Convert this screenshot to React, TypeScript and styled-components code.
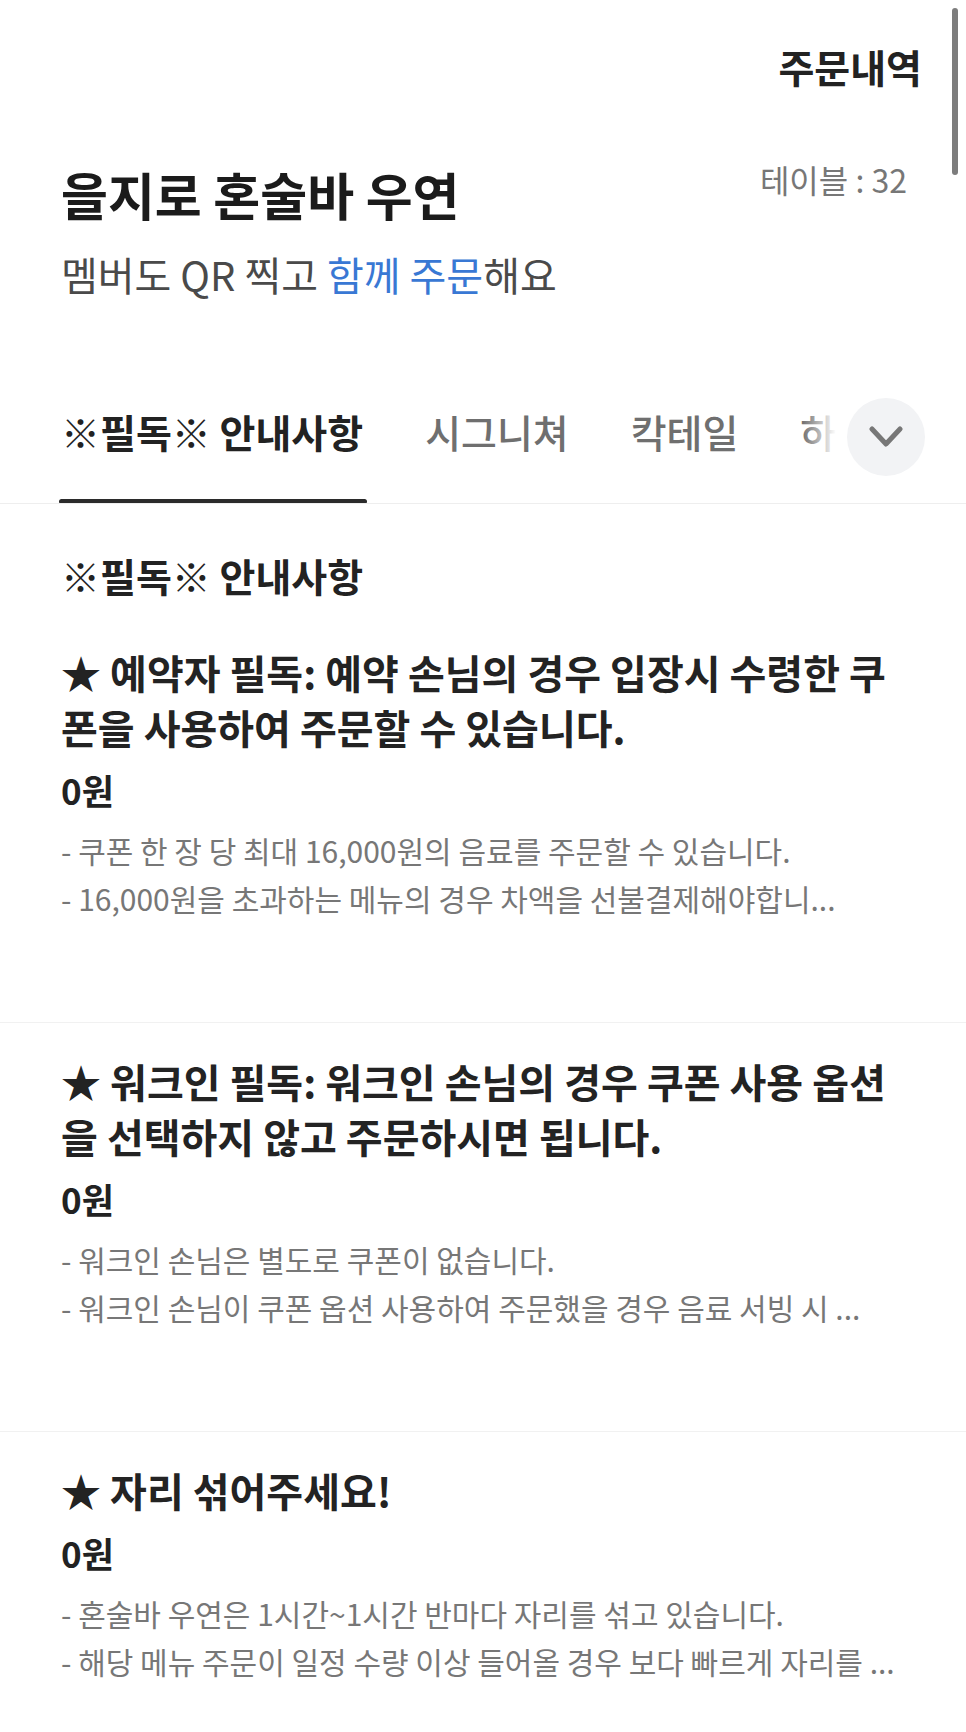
import React from 'react';
import styled, { createGlobalStyle } from 'styled-components';

const GlobalStyle = createGlobalStyle`
  html, body { margin: 0; padding: 0; background: #ffffff; }
  body {
    font-family: "Noto Sans CJK KR", "Noto Sans", sans-serif;
    color: #222222;
    -webkit-font-smoothing: antialiased;
  }
  * { box-sizing: border-box; }
`;

const Page = styled.div`
  position: relative;
  width: 966px;
  min-height: 1732px;
  background: #ffffff;
  overflow: hidden;
`;

const ScrollThumb = styled.div`
  position: absolute;
  top: 8px;
  right: 8px;
  width: 6px;
  height: 167px;
  border-radius: 3px;
  background: #7d7d7d;
`;

const TopBar = styled.header`
  display: flex;
  justify-content: flex-end;
  padding: 42px 44px 0 61px;
`;

const OrderHistoryButton = styled.button`
  border: 0;
  background: none;
  padding: 0;
  font-family: inherit;
  font-size: 39px;
  font-weight: 700;
  line-height: 48px;
  color: #222222;
`;

const StoreInfo = styled.section`
  padding: 69px 59px 0 61px;
`;

const StoreRow = styled.div`
  display: flex;
  justify-content: space-between;
  align-items: flex-start;
`;

const StoreName = styled.h1`
  margin: 0;
  font-size: 51px;
  font-weight: 700;
  line-height: 70px;
  color: #1b1b1b;
`;

const TableNo = styled.span`
  font-size: 32px;
  line-height: 40px;
  color: #777777;
`;

const Subtitle = styled.p`
  margin: 20px 0 0;
  font-size: 40px;
  line-height: 50px;
  color: #4a4a4a;
`;

const Highlight = styled.span`
  color: #3978d4;
`;

const TabBar = styled.nav`
  position: relative;
  margin-top: 71px;
  border-bottom: 1px solid #eeeeee;
`;

const TabList = styled.div`
  display: flex;
  gap: 62px;
  padding: 36px 0 0 61px;
  overflow: hidden;
  white-space: nowrap;
`;

const Tab = styled.div<{ $active?: boolean }>`
  position: relative;
  flex: none;
  font-size: 39px;
  line-height: 50px;
  padding-bottom: 47px;
  font-weight: ${p => (p.$active ? 700 : 500)};
  color: ${p => (p.$active ? '#222222' : '#6f6f6f')};

  &::after {
    content: '';
    display: ${p => (p.$active ? 'block' : 'none')};
    position: absolute;
    left: -2px;
    right: -4px;
    bottom: -1px;
    height: 5px;
    border-radius: 3px;
    background: #2b2b2b;
  }
`;

const TabFade = styled.div`
  position: absolute;
  top: 0;
  bottom: 1px;
  right: 0;
  width: 164px;
  background: linear-gradient(90deg, rgba(255, 255, 255, 0) 0px, #ffffff 34px);
`;

const ExpandButton = styled.button`
  position: absolute;
  top: 28px;
  right: 41px;
  width: 78px;
  height: 78px;
  border: 0;
  padding: 0;
  border-radius: 50%;
  background: #f2f3f5;
  display: flex;
  align-items: center;
  justify-content: center;
`;

const SectionTitle = styled.h2`
  margin: 0;
  padding: 46px 61px 0;
  font-size: 39px;
  font-weight: 700;
  line-height: 50px;
  color: #222222;
`;

const MenuList = styled.div`
  margin-top: 14px;
`;

const MenuItem = styled.article`
  padding: 31px 61px 100px;
  border-bottom: 1px solid #f1f1f1;
`;

const MenuTitle = styled.h3`
  margin: 0;
  font-size: 40px;
  font-weight: 700;
  line-height: 55px;
  color: #232323;
`;

const Price = styled.div`
  margin-top: 13px;
  font-size: 35px;
  font-weight: 700;
  line-height: 44px;
  color: #222222;
`;

const Description = styled.div`
  margin-top: 14px;
  font-size: 30px;
  line-height: 48px;
  color: #777777;
`;

const DescLine = styled.div`
  white-space: nowrap;
  overflow: hidden;
`;

const ChevronDown = () => (
  <svg width="34" height="22" viewBox="0 0 34 22" fill="none">
    <polyline
      points="3,3 17,18 31,3"
      stroke="#777777"
      strokeWidth="5"
      strokeLinecap="round"
      strokeLinejoin="round"
    />
  </svg>
);

const tabs = ['※필독※ 안내사항', '시그니쳐', '칵테일', '하이볼', '맥주'];

const items = [
  {
    title: '★ 예약자 필독: 예약 손님의 경우 입장시 수령한 쿠폰을 사용하여 주문할 수 있습니다.',
    price: '0원',
    lines: [
      '- 쿠폰 한 장 당 최대 16,000원의 음료를 주문할 수 있습니다.',
      '- 16,000원을 초과하는 메뉴의 경우 차액을 선불결제해야합니...',
    ],
  },
  {
    title: '★ 워크인 필독: 워크인 손님의 경우 쿠폰 사용 옵션을 선택하지 않고 주문하시면 됩니다.',
    price: '0원',
    lines: [
      '- 워크인 손님은 별도로 쿠폰이 없습니다.',
      '- 워크인 손님이 쿠폰 옵션 사용하여 주문했을 경우 음료 서빙 시 ...',
    ],
  },
  {
    title: '★ 자리 섞어주세요!',
    price: '0원',
    lines: [
      '- 혼술바 우연은 1시간~1시간 반마다 자리를 섞고 있습니다.',
      '- 해당 메뉴 주문이 일정 수량 이상 들어올 경우 보다 빠르게 자리를 ...',
    ],
  },
];

export default function App() {
  return (
    <Page>
      <GlobalStyle />
      <TopBar>
        <OrderHistoryButton>주문내역</OrderHistoryButton>
      </TopBar>
      <StoreInfo>
        <StoreRow>
          <StoreName>을지로 혼술바 우연</StoreName>
          <TableNo>테이블 : 32</TableNo>
        </StoreRow>
        <Subtitle>
          멤버도 QR 찍고 <Highlight>함께 주문</Highlight>해요
        </Subtitle>
      </StoreInfo>
      <TabBar>
        <TabList>
          {tabs.map((t, i) => (
            <Tab key={t} $active={i === 0}>
              {t}
            </Tab>
          ))}
        </TabList>
        <TabFade />
        <ExpandButton aria-label="카테고리 펼치기">
          <ChevronDown />
        </ExpandButton>
      </TabBar>
      <SectionTitle>※필독※ 안내사항</SectionTitle>
      <MenuList>
        {items.map(item => (
          <MenuItem key={item.title}>
            <MenuTitle>{item.title}</MenuTitle>
            <Price>{item.price}</Price>
            <Description>
              {item.lines.map(l => (
                <DescLine key={l}>{l}</DescLine>
              ))}
            </Description>
          </MenuItem>
        ))}
      </MenuList>
      <ScrollThumb />
    </Page>
  );
}
